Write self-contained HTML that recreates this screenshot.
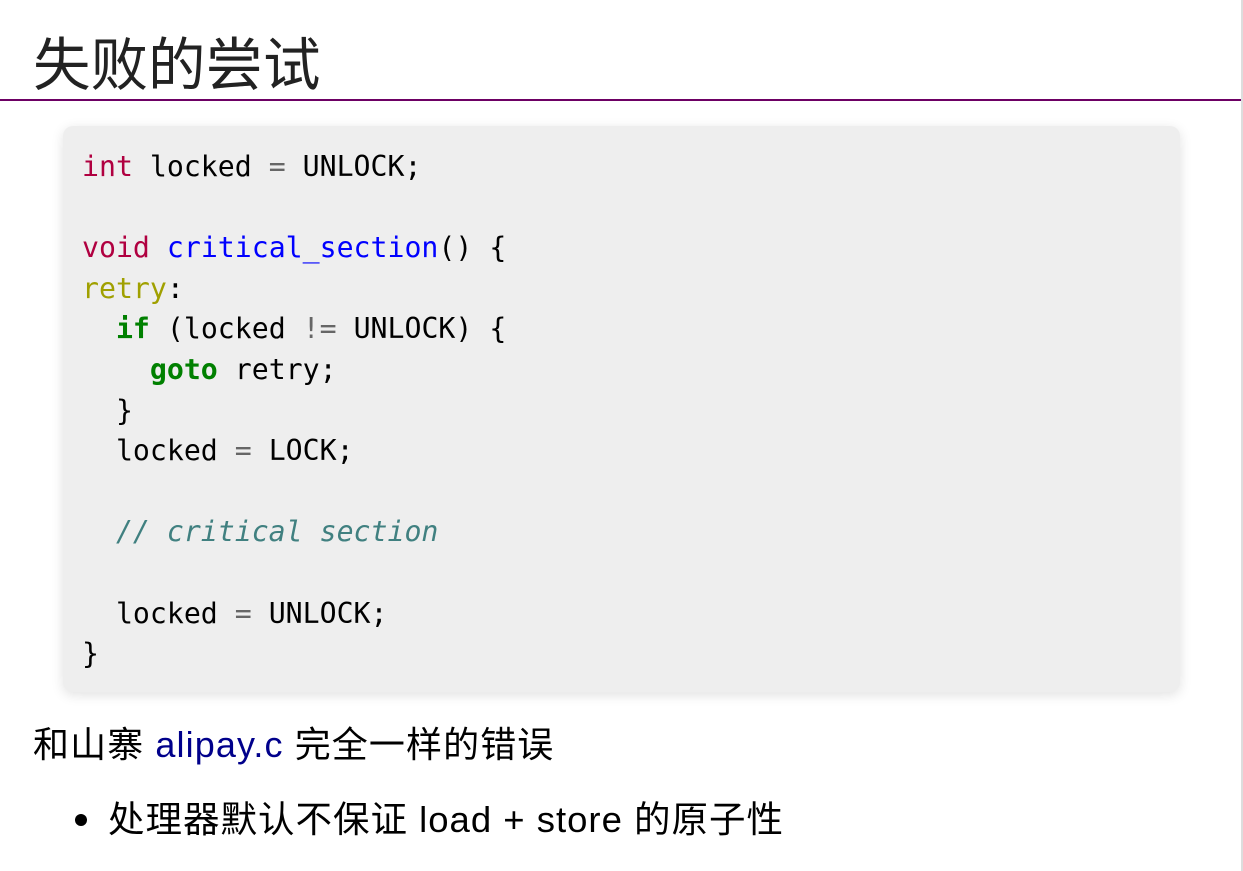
<!DOCTYPE html>
<html><head><meta charset="utf-8"><style>
html,body{margin:0;padding:0;background:#fff;width:1243px;height:871px;overflow:hidden}
body{position:relative;font-family:"Liberation Sans","Noto Sans CJK SC",sans-serif;color:#000}
.edge{position:absolute;right:0;top:0;width:2px;height:871px;background:#ddd}
h1{position:absolute;left:33px;top:22px;margin:0;font-size:57.5px;font-weight:normal;line-height:76px;color:#222;font-family:"Noto Sans CJK SC",sans-serif}
.rule{position:absolute;left:0;top:99px;width:1241px;height:2px;background:#6d0064}
pre{position:absolute;left:63px;top:126px;width:1117px;height:566px;box-sizing:border-box;margin:0;padding:21px 0 0 19px;background:#eee;border-radius:10px;box-shadow:0 3px 12px rgba(0,0,0,0.12);font-family:"DejaVu Sans Mono","Liberation Mono",monospace;font-size:28.2px;line-height:40.6px;color:#000}
.t{color:#b00040}.f{color:#0000ff}.l{color:#a0a000}.k{color:#008000;font-weight:bold}.o{color:#666}.c{color:#408080;font-style:italic}
.p{position:absolute;left:33px;top:721px;font-size:36px;line-height:48px;font-family:"Liberation Sans","Noto Sans CJK SC",sans-serif;letter-spacing:1.1px}
.p a{color:#00008b;text-decoration:none}
.li{position:absolute;left:108px;top:796px;font-size:36.5px;line-height:48px;letter-spacing:1px}
.dot{position:absolute;left:75px;top:814px;width:12px;height:12px;border-radius:50%;background:#000}
</style></head><body>
<div class="edge"></div>
<h1>失败的尝试</h1>
<div class="rule"></div>
<pre><span class="t">int</span> locked <span class="o">=</span> UNLOCK;

<span class="t">void</span> <span class="f">critical_section</span>() {
<span class="l">retry</span>:
  <span class="k">if</span> (locked <span class="o">!=</span> UNLOCK) {
    <span class="k">goto</span> retry;
  }
  locked <span class="o">=</span> LOCK;

  <span class="c">// critical section</span>

  locked <span class="o">=</span> UNLOCK;
}</pre>
<div class="p">和山寨 <a>alipay.c</a> 完全一样的错误</div>
<div class="dot"></div>
<div class="li">处理器默认不保证 load + store 的原子性</div>
</body></html>
